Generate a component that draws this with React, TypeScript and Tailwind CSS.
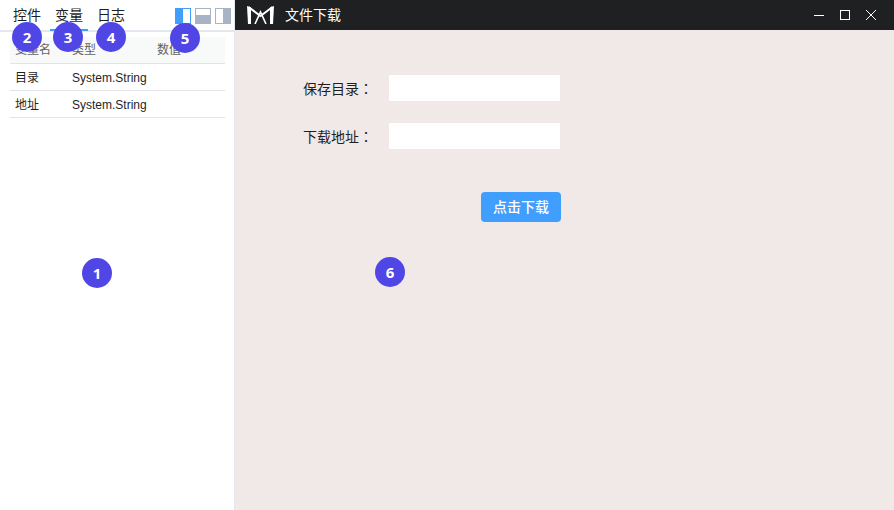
import React from "react";

const fontStack = "font-['Liberation_Sans','Noto_Sans_CJK_SC',sans-serif]";
const colonFont = "font-['Noto_Sans_CJK_TC',sans-serif]";

const variables = [
  { name: "目录", type: "System.String" },
  { name: "地址", type: "System.String" },
];

const tabs = [
  { label: "控件", className: "w-[38px] ml-[8px]", active: false },
  { label: "变量", className: "w-[38px] ml-[4px]", active: true },
  { label: "日志", className: "w-[38px] ml-[4px]", active: false },
];

const badges = [
  { n: 1, pos: "left-[82px] top-[258px]" },
  { n: 2, pos: "left-[12px] top-[22px]" },
  { n: 3, pos: "left-[53px] top-[22px]" },
  { n: 4, pos: "left-[96px] top-[22px]" },
  { n: 5, pos: "left-[170px] top-[23px]" },
  { n: 6, pos: "left-[375px] top-[257px]" },
];

function LayoutIcons() {
  return (
    <div className="flex gap-[4px] mr-[3px] mt-[8px]">
      <svg width="16" height="16" viewBox="0 0 16 16">
        <rect x="0" y="0" width="16" height="16" fill="#409eff" />
        <rect x="8" y="1" width="7" height="14" fill="#ffffff" />
      </svg>
      <svg width="16" height="16" viewBox="0 0 16 16">
        <rect x="0" y="0" width="16" height="16" fill="#a8b3c6" />
        <rect x="1" y="1" width="14" height="6" fill="#ffffff" />
      </svg>
      <svg width="16" height="16" viewBox="0 0 16 16">
        <rect x="0" y="0" width="16" height="16" fill="#a8b3c6" />
        <rect x="1" y="1" width="7" height="14" fill="#ffffff" />
      </svg>
    </div>
  );
}

function Logo() {
  return (
    <svg width="28" height="18" viewBox="0 0 28 18" fill="none" className="ml-[12px]">
      <path d="M0 0 L4 1.5 L4 18 L1 18 Z" fill="#ffffff" />
      <path d="M27 0 L23 1.5 L23 18 L26 18 Z" fill="#ffffff" />
      <path d="M1.5 1 L13.5 10 L25.5 1" stroke="#ffffff" strokeWidth="2" />
      <path d="M8 18 L13.5 6 L19 18" stroke="#ffffff" strokeWidth="1.6" />
    </svg>
  );
}

function WindowButtons() {
  return (
    <div className="flex items-center gap-[16px] mr-[18px]">
      <svg width="10" height="10" viewBox="0 0 10 10">
        <path d="M0 5.5 H10" stroke="#ffffff" strokeWidth="1" />
      </svg>
      <svg width="10" height="10" viewBox="0 0 10 10">
        <rect x="0.5" y="0.5" width="9" height="9" stroke="#ffffff" strokeWidth="1" fill="none" />
      </svg>
      <svg width="10" height="10" viewBox="0 0 10 10">
        <path d="M0 0 L10 10 M10 0 L0 10" stroke="#ffffff" strokeWidth="1" />
      </svg>
    </div>
  );
}

function FormRow({ label }: { label: string }) {
  return (
    <div className="flex items-center h-[26px]">
      <label className="w-[86px] text-sm leading-[26px] text-[#1f1f1f]">
        {label}
        <span className={colonFont}>：</span>
      </label>
      <input className="w-[171px] h-[26px] bg-white outline-none" />
    </div>
  );
}

export default function App() {
  return (
    <div className={`relative flex w-[894px] h-[510px] overflow-hidden bg-white ${fontStack}`}>
      <aside className="w-[235px] h-full border-r border-[#e4e7ed] flex flex-col">
        <div className="relative h-[32px] border-b-2 border-[#e4e7ed] flex justify-between">
          <div className="flex">
            {tabs.map((t) => (
              <div
                key={t.label}
                className={`${t.className} h-[31px] pt-[5px] text-center text-sm text-[#1f1f1f] ${
                  t.active ? "border-b-2 border-[#409eff]" : ""
                }`}
              >
                {t.label}
              </div>
            ))}
          </div>
          <LayoutIcons />
        </div>

        <div className="mx-[10px] mt-[5px] w-[215px] text-xs">
          <div className="flex h-[27px] items-center bg-[#f8f9f9] border-b border-[#e2e4e6] text-[#606266]">
            <span className="w-[62px] pl-[5px]">变量名</span>
            <span className="w-[85px]">类型</span>
            <span>数值</span>
          </div>
          {variables.map((v) => (
            <div
              key={v.name}
              className="flex h-[27px] items-center pt-[1px] border-b border-[#e2e4e6] text-[#1f1f1f]"
            >
              <span className="w-[62px] pl-[5px]">{v.name}</span>
              <span>{v.type}</span>
            </div>
          ))}
        </div>
      </aside>

      <main className="flex-1 flex flex-col bg-[#f0e9e7]">
        <header className="h-[30px] bg-[#1e2022] flex items-center justify-between">
          <div className="flex items-center">
            <Logo />
            <span className="ml-[10px] text-sm text-white">文件下载</span>
          </div>
          <WindowButtons />
        </header>
        <div className="pl-[68px] pt-[45px] w-[326px] flex flex-col gap-[22px]">
          <FormRow label="保存目录" />
          <FormRow label="下载地址" />
          <div className="flex justify-end mt-[21px]">
            <button className="w-[80px] h-[30px] rounded-[4px] bg-[#409eff] text-sm font-medium text-white">
              点击下载
            </button>
          </div>
        </div>
      </main>

      {badges.map((b) => (
        <div
          key={b.n}
          className={`absolute ${b.pos} w-[30px] h-[30px] rounded-full bg-[#4f46e5] text-white text-[15px] font-bold font-['Open_Sans',sans-serif] flex items-center justify-center`}
        >
          {b.n}
        </div>
      ))}
    </div>
  );
}
